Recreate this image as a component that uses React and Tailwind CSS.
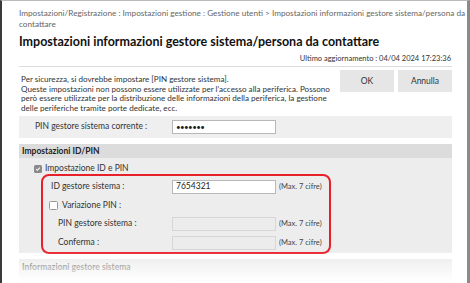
import React from 'react';

function TextInput({ value, disabled }) {
  return (
    <div
      className={
        'w-[104px] h-[14px] border flex items-center px-[3px] text-[8.5px] ' +
        (disabled ? 'bg-[#ececec] border-[#d6d6d6]' : 'bg-white border-[#b8b8b8] text-[#222]')
      }
    >
      {value}
    </div>
  );
}

function FieldRow({ label, value, disabled, rowClass, labelClass }) {
  return (
    <div className={'flex items-center ' + rowClass}>
      <div className={labelClass + ' text-[8.5px] text-[#333] whitespace-nowrap'}>{label}</div>
      <TextInput value={value} disabled={disabled} />
      <span className="ml-[3px] text-[7.5px] text-[#444] whitespace-nowrap">(Max. 7 cifre)</span>
    </div>
  );
}

export default function App() {
  return (
    <div
      className="relative w-[470px] h-[283px] overflow-hidden bg-white border-l-2 border-l-[#3a3a3a] border-t border-t-[#bbb] border-r-[3px] border-r-[#8a8a8a]"
      style={{ fontFamily: 'Lato, "Noto Sans", sans-serif' }}
    >
      <div className="pl-[17px] pr-[15px] pt-[7px]">
        {/* breadcrumb */}
        <div className="text-[8.2px] leading-[11px] text-[#666] whitespace-nowrap">
          Impostazioni/Registrazione : Impostazioni gestione : Gestione utenti &gt; Impostazioni informazioni gestore sistema/persona da
          <br />
          contattare
        </div>

        <h1 className="mt-[4px] text-[12.5px] leading-[16px] font-bold text-[#111] whitespace-nowrap">
          Impostazioni informazioni gestore sistema/persona da contattare
        </h1>

        <div className="mt-[4px] pb-[2px] text-right text-[7.5px] leading-[10px] text-[#333] border-b border-[#dcdcdc] pr-[1px]">
          Ultimo aggiornamento : 04/04 2024 17:23:36
        </div>

        {/* intro + buttons */}
        <div className="flex justify-between pt-[3px]">
          <p className="pt-[5px] pl-[2px] text-[8.1px] leading-[9.7px] text-[#333] whitespace-nowrap">
            Per sicurezza, si dovrebbe impostare [PIN gestore sistema].
            <br />
            Queste impostazioni non possono essere utilizzate per l'accesso alla periferica. Possono
            <br />
            però essere utilizzate per la distribuzione delle informazioni della periferica, la gestione
            <br />
            delle periferiche tramite porte dedicate, ecc.
          </p>
          <div className="flex gap-[4px] shrink-0">
            <button className="w-[54px] h-[22px] bg-[#e6e6e6] text-[8.5px] text-[#333]">OK</button>
            <button className="w-[54px] h-[22px] bg-[#e6e6e6] text-[8.5px] text-[#333]">Annulla</button>
          </div>
        </div>

        <div className="mt-[2px] h-[22px] bg-[#efefef] flex items-center">
          <div className="w-[153px] pl-[16px] text-[8.5px] text-[#333] whitespace-nowrap">PIN gestore sistema corrente :</div>
          <div className="w-[104px] h-[14px] bg-white border border-[#b8b8b8] flex items-center px-[3px] text-[8px] leading-none tracking-[-0.6px] text-[#222]">
            •••••••
          </div>
        </div>

        <div className="mt-[6px] border-t border-[#dcdcdc]"></div>

        {/* Impostazioni ID/PIN */}
        <div className="h-[13px] bg-[#dcdcdc] flex items-center pl-[3px] text-[8.5px] font-bold text-[#222]">
          Impostazioni ID/PIN
        </div>
        <div className="relative bg-[#ededed] pt-[6px]">
          <div className="flex items-center h-[10px] pl-[15px] gap-[3px]">
            <span className="w-[8px] h-[8px] rounded-[1.5px] bg-[#8a8a8a] flex items-center justify-center">
              <svg width="6" height="6" viewBox="0 0 10 10">
                <path d="M2 5.2l2 2 4-4.5" stroke="#fff" strokeWidth="1.8" fill="none" />
              </svg>
            </span>
            <span className="text-[8.5px] text-[#333]">Impostazione ID e PIN</span>
          </div>

          <div className="pt-[3px]">
            <FieldRow label="ID gestore sistema :" value="7654321" rowClass="h-[20px]" labelClass="w-[153px] pl-[32px]" />
            <div className="flex items-center h-[18px] pl-[30px] gap-[4px]">
              <span className="w-[9px] h-[9px] rounded-[1.5px] bg-white border border-[#999]"></span>
              <span className="text-[8.5px] text-[#333]">Variazione PIN :</span>
            </div>
            <FieldRow label="PIN gestore sistema :" disabled rowClass="h-[18px]" labelClass="w-[153px] pl-[39px]" />
            <FieldRow label="Conferma :" disabled rowClass="h-[20px]" labelClass="w-[153px] pl-[39px]" />
          </div>

          {/* highlight annotation */}
          <div className="absolute left-[22px] top-[16px] w-[290px] h-[80px] border-2 border-[#e8202a] rounded-[8px] pointer-events-none"></div>
        </div>

        <div className="mt-[6px] h-[18px] bg-[#e8e8e8] flex items-center pl-[3px] text-[8.5px] font-bold text-[#444]">
          Informazioni gestore sistema
        </div>
        <div className="h-[30px] bg-[#f2f2f2] pt-[3px] pl-[153px]">
          <div className="w-[212px] h-[14px] bg-white border border-[#ccc]"></div>
        </div>
      </div>

      {/* bottom fade */}
      <div className="absolute left-0 right-0 bottom-0 h-[32px] bg-gradient-to-b from-white/0 via-white/60 to-white pointer-events-none"></div>
    </div>
  );
}
